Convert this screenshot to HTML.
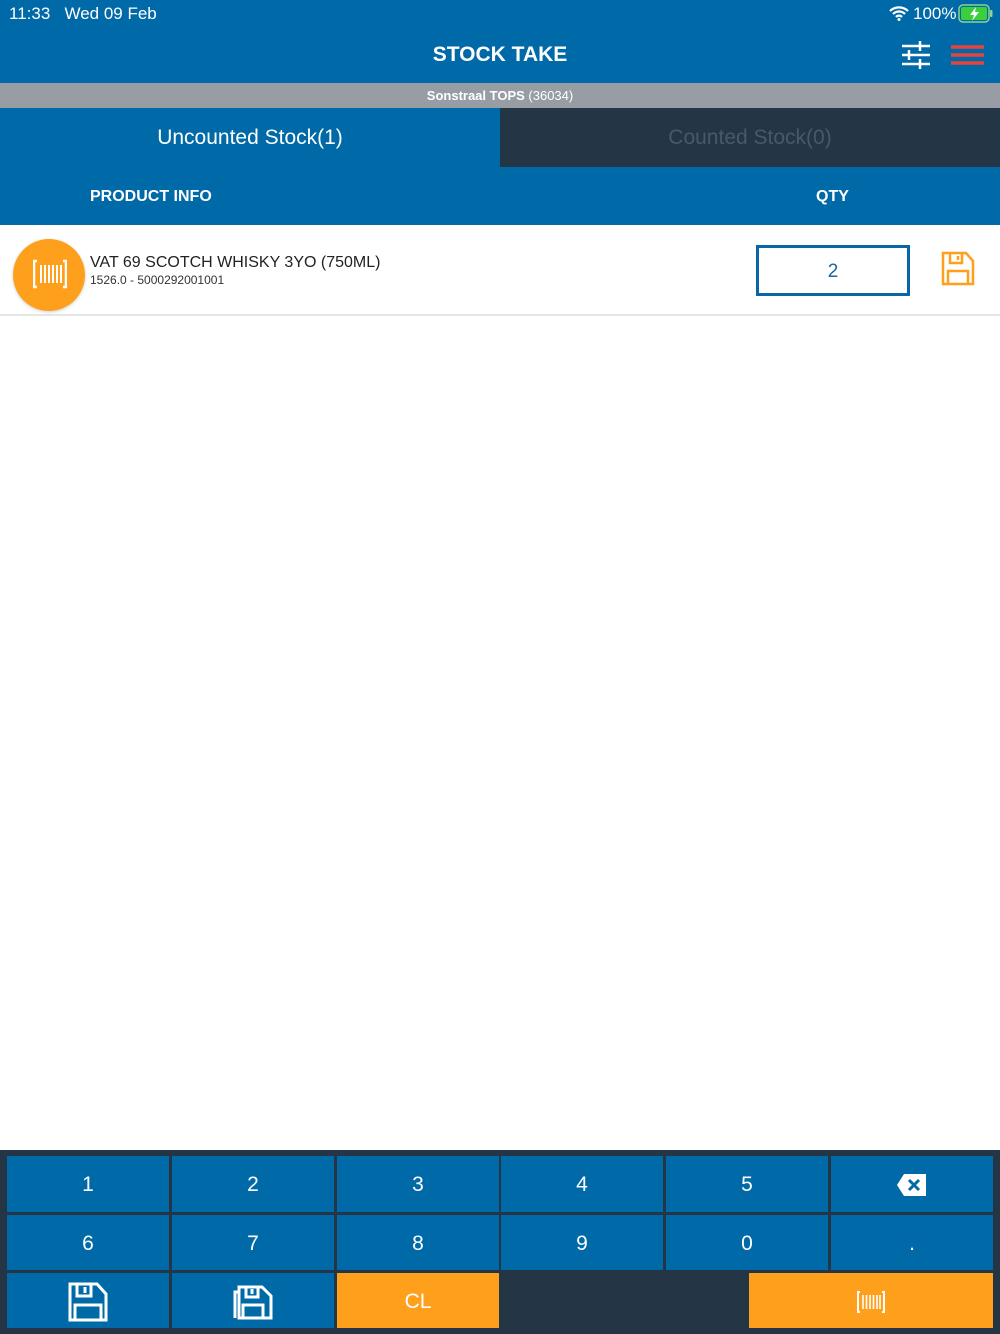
<!DOCTYPE html>
<html><head><meta charset="utf-8"><style>
*{margin:0;padding:0;box-sizing:border-box}
body{width:1000px;height:1334px;background:#fff;font-family:"Liberation Sans",Arial,sans-serif;position:relative;overflow:hidden}
.a{position:absolute}
.blue{background:#0069a8}
.key{position:absolute;background:#0069a8;color:#fff;font-size:21px;display:flex;align-items:center;justify-content:center;padding-top:2px}
.or{background:#ffa01c}
</style></head><body>
<div class="a blue" style="left:0;top:0;width:1000px;height:83px"></div>
<div class="a" style="left:9px;top:4px;color:#fff;font-size:17px">11:33&nbsp;&nbsp;&nbsp;Wed 09 Feb</div>
<div class="a" style="left:913px;top:4px;color:#fff;font-size:17px">100%</div>
<svg class="a" style="left:888px;top:5px" width="22" height="16" viewBox="0 0 22 16"><path d="M2 6a13 13 0 0 1 18 0M5 9a8.5 8.5 0 0 1 12 0M8 12a4 4 0 0 1 6 0" stroke="#fff" stroke-width="2.2" fill="none"/><circle cx="11" cy="14.5" r="1.5" fill="#fff"/></svg>
<svg class="a" style="left:958px;top:4px" width="36" height="19" viewBox="0 0 36 19"><rect x="1" y="1" width="30" height="17" rx="4" fill="none" stroke="#8fd18f" stroke-width="1.5"/><rect x="3" y="3" width="26" height="13" rx="2" fill="#3bd03b"/><rect x="32" y="6" width="2.5" height="7" rx="1" fill="#8fd18f"/><path d="M18 3l-6 8h4l-2 6 7-9h-4z" fill="#fff"/></svg>
<div class="a" style="left:0;top:43px;width:1000px;text-align:center;color:#fff;font-size:21px;font-weight:bold">STOCK TAKE</div>
<svg class="a" style="left:901px;top:40px" width="30" height="30" viewBox="0 0 30 30" stroke="#fff" stroke-width="2.5"><path d="M1 6h28M1 15h28M1 24h28"/><path d="M19 1v10M8 10v10M19 19v10"/></svg>
<svg class="a" style="left:951px;top:44px" width="33" height="22" viewBox="0 0 33 22" stroke="#e8423b" stroke-width="3.5"><path d="M0 3h33M0 11h33M0 19h33"/></svg>
<div class="a" style="left:0;top:83px;width:1000px;height:25px;background:#989ca4;color:#fff;font-size:13px;text-align:center;line-height:25px"><b>Sonstraal TOPS</b> (36034)</div>
<div class="a blue" style="left:0;top:108px;width:500px;height:117px"></div>
<div class="a" style="left:500px;top:108px;width:500px;height:59px;background:#243646"></div>
<div class="a blue" style="left:500px;top:167px;width:500px;height:58px"></div>
<div class="a" style="left:0;top:126px;width:500px;text-align:center;color:#fff;font-size:21px">Uncounted Stock(1)</div>
<div class="a" style="left:500px;top:126px;width:500px;text-align:center;color:#48596a;font-size:21px">Counted Stock(0)</div>
<div class="a" style="left:90px;top:188px;color:#fff;font-size:16px;font-weight:bold">PRODUCT INFO</div>
<div class="a" style="left:816px;top:188px;color:#fff;font-size:16px;font-weight:bold">QTY</div>
<div class="a" style="left:0;top:314px;width:1000px;height:2px;background:#e6e6e6"></div>
<div class="a or" style="left:13px;top:239px;width:72px;height:72px;border-radius:50%;box-shadow:0 1px 3px rgba(0,0,0,.2)"></div>
<svg class="a" style="left:33px;top:259px" width="34" height="30" viewBox="0 0 34 30" stroke="#fff" stroke-width="2.5" fill="none"><path d="M4 2H1v26h3M30 2h3v26h-3"/><path d="M8 6v18M12 6v18M16 6v18M20 6v18M24 6v18M28 6v18" stroke-width="2"/></svg>
<div class="a" style="left:90px;top:254px;color:#222;font-size:16px">VAT 69 SCOTCH WHISKY 3YO (750ML)</div>
<div class="a" style="left:90px;top:273px;color:#333;font-size:12px">1526.0 - 5000292001001</div>
<div class="a" style="left:756px;top:245px;width:154px;height:51px;border:3px solid #0a64a8;color:#1c64a6;font-size:19px;text-align:center;line-height:47px">2</div>
<svg class="a" style="left:941px;top:251px" width="34" height="35" viewBox="0 0 34 35" stroke="#ffa01c" stroke-width="2.5" fill="none"><path d="M2 2h23l7 8v23H2z"/><path d="M9 2v10h12V2M17 5v4M7 33V20h20v13"/></svg>
<div class="a" style="left:0;top:1150px;width:1000px;height:184px;background:#243646"></div>
<div class="key" style="left:7px;top:1156px;width:162px;height:56px">1</div>
<div class="key" style="left:172px;top:1156px;width:162px;height:56px">2</div>
<div class="key" style="left:337px;top:1156px;width:162px;height:56px">3</div>
<div class="key" style="left:501px;top:1156px;width:162px;height:56px">4</div>
<div class="key" style="left:666px;top:1156px;width:162px;height:56px">5</div>
<div class="key" style="left:831px;top:1156px;width:162px;height:56px"><svg width="32" height="24" viewBox="0 0 32 24"><path d="M8 1h22v22H8L1 12z" fill="#fff" rx="3"/><path d="M13 7l10 10M23 7L13 17" stroke="#0069a8" stroke-width="3"/></svg></div>
<div class="key" style="left:7px;top:1215px;width:162px;height:55px">6</div>
<div class="key" style="left:172px;top:1215px;width:162px;height:55px">7</div>
<div class="key" style="left:337px;top:1215px;width:162px;height:55px">8</div>
<div class="key" style="left:501px;top:1215px;width:162px;height:55px">9</div>
<div class="key" style="left:666px;top:1215px;width:162px;height:55px">0</div>
<div class="key" style="left:831px;top:1215px;width:162px;height:55px">.</div>
<div class="key" style="left:7px;top:1273px;width:162px;height:55px"><svg width="40" height="40" viewBox="0 0 40 40" stroke="#fff" stroke-width="3" fill="none"><path d="M2 2h27l9 10v26H2z"/><path d="M9 2v12h14V2M17 5v6M7 38V23h26v15"/></svg></div>
<div class="key" style="left:172px;top:1273px;width:162px;height:55px"><svg width="40" height="40" viewBox="0 0 40 40" stroke="#fff" stroke-width="3" fill="none"><path d="M6 5h23l9 9v22H6z"/><path d="M13 5v10h12V5M19 7v5M10 36V23h20v13M6 10H2v26"/></svg></div>
<div class="key or" style="left:337px;top:1273px;width:162px;height:55px">CL</div>
<div class="key or" style="left:749px;top:1273px;width:244px;height:55px"><svg width="28" height="22" viewBox="0 0 28 22" stroke="#fff" stroke-width="2" fill="none"><path d="M3 1H1v20h2M25 1h2v20h-2"/><path d="M6 4v14M9.5 4v14M13 4v14M16.5 4v14M20 4v14M23 4v14" stroke-width="1.6"/></svg></div>
</body></html>
